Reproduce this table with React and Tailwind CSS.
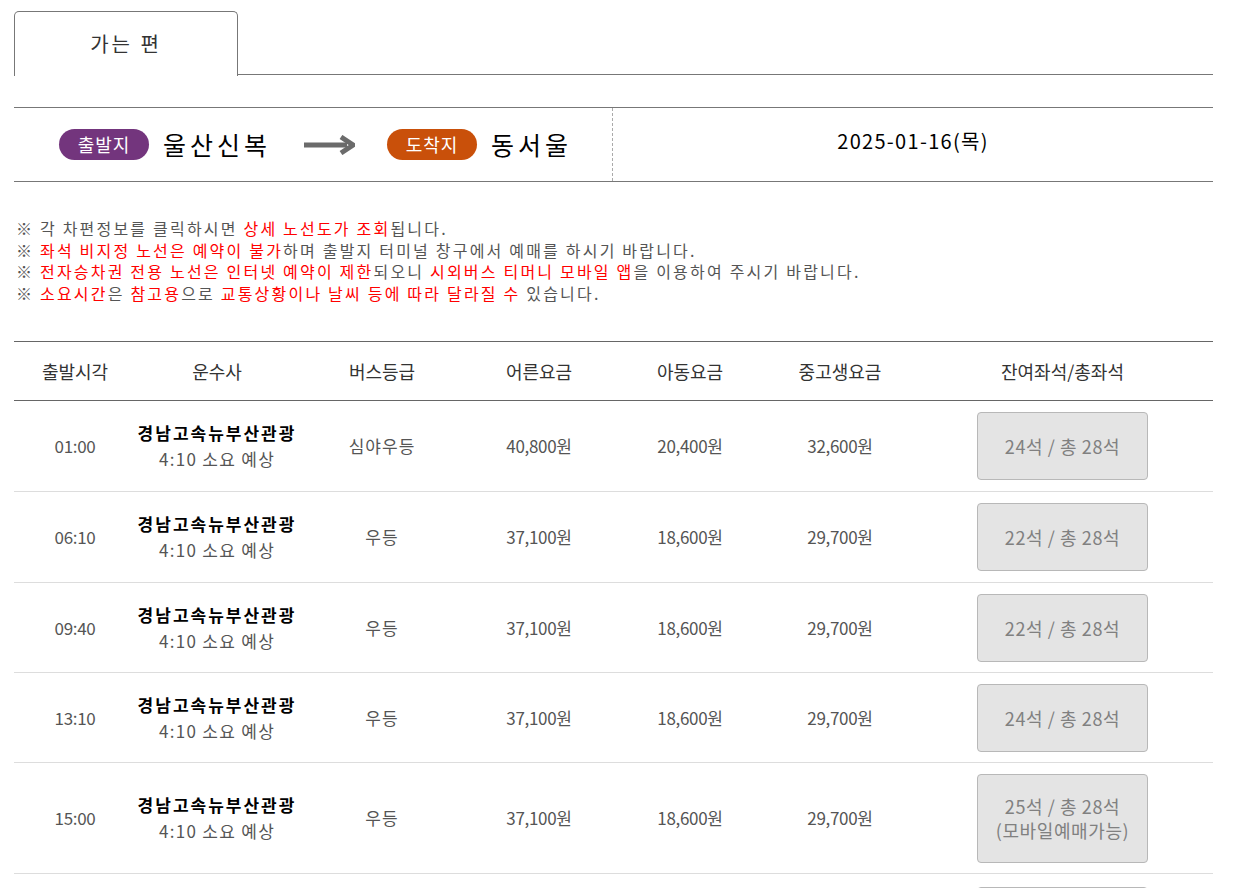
import React from 'react';

const FONT = { fontFamily: '"Noto Sans CJK KR", "Noto Sans", sans-serif' };

const rows = [
  { time: '01:00', grade: '심야우등', adult: '40,800원', child: '20,400원', teen: '32,600원', seats: '24석 / 총 28석', h: 'h-[91px]' },
  { time: '06:10', grade: '우등', adult: '37,100원', child: '18,600원', teen: '29,700원', seats: '22석 / 총 28석', h: 'h-[91px]' },
  { time: '09:40', grade: '우등', adult: '37,100원', child: '18,600원', teen: '29,700원', seats: '22석 / 총 28석', h: 'h-[90px]' },
  { time: '13:10', grade: '우등', adult: '37,100원', child: '18,600원', teen: '29,700원', seats: '24석 / 총 28석', h: 'h-[90px]' },
  { time: '15:00', grade: '우등', adult: '37,100원', child: '18,600원', teen: '29,700원', seats: '25석 / 총 28석', h: 'h-[111px]', mobile: true },
];

const cols = 'grid grid-cols-[122px_162px_168px_146px_156px_144px_301px]';

const Red = ({ children }) => <span className="text-[#ff0000]">{children}</span>;

const Arrow = () => (
  <svg width="52" height="20" viewBox="0 0 52 20" className="mx-8">
    <line x1="1" y1="10" x2="44" y2="10" stroke="#6b6b6b" strokeWidth="5" />
    <path d="M38 2 L50 10 L38 18" fill="none" stroke="#6b6b6b" strokeWidth="5" strokeLinejoin="miter" />
  </svg>
);

export default function App() {
  return (
    <div className="bg-white w-[1255px] min-h-[888px] px-[14px] pt-[11px] overflow-hidden" style={FONT}>
      {/* tab */}
      <div className="flex items-end w-[1199px]">
        <div className="w-[224px] h-[65px] border border-b-0 border-[#777] rounded-t-[5px] flex items-center justify-center text-[20px] text-[#333] tracking-[3px] -mb-px bg-white relative z-10">
          가는 편
        </div>
        <div className="flex-1 border-b border-[#777]" />
      </div>

      {/* route */}
      <div className="mt-[32px] w-[1199px] h-[75px] border-y border-[#777] flex">
        <div className="w-[599px] border-r border-dashed border-[#aaa] flex items-center pl-[45px]">
          <span className="h-[31px] w-[90px] rounded-full bg-[#73357d] text-white text-[18px] tracking-[1px] flex items-center justify-center">출발지</span>
          <span className="ml-[14px] text-[25px] text-black tracking-[4px]">울산신복</span>
          <Arrow />
          <span className="h-[31px] w-[90px] rounded-full bg-[#c9500a] text-white text-[18px] tracking-[1px] flex items-center justify-center">도착지</span>
          <span className="ml-[14px] text-[25px] text-black tracking-[4px]">동서울</span>
        </div>
        <div className="flex-1 flex items-center justify-center text-[20px] text-black pb-[8px] tracking-[1.3px]">
          2025-01-16(목)
        </div>
      </div>

      {/* notes */}
      <div className="mt-[36px] pl-[2px] text-[16px] leading-[21.5px] text-[#555] tracking-[2.2px]">
        <p>※ 각 차편정보를 클릭하시면 <Red>상세 노선도가 조회</Red>됩니다.</p>
        <p>※ <Red>좌석 비지정 노선은 예약이 불가</Red>하며 출발지 터미널 창구에서 예매를 하시기 바랍니다.</p>
        <p>※ <Red>전자승차권 전용 노선은 인터넷 예약이 제한</Red>되오니 <Red>시외버스 티머니 모바일 앱</Red>을 이용하여 주시기 바랍니다.</p>
        <p>※ <Red>소요시간</Red>은 <Red>참고용</Red>으로 <Red>교통상황이나 날씨 등에 따라 달라질 수</Red> 있습니다.</p>
      </div>

      {/* table */}
      <div className="mt-[37px] w-[1199px]">
        <div className={`${cols} h-[60px] border-y border-[#666] items-center text-center text-[18px] text-[#333]`}>
          <div>출발시각</div>
          <div>운수사</div>
          <div>버스등급</div>
          <div>어른요금</div>
          <div>아동요금</div>
          <div>중고생요금</div>
          <div>잔여좌석/총좌석</div>
        </div>
        {rows.map((r) => (
          <div
            key={r.time}
            className={`${cols} ${r.h} border-b border-[#ddd] items-center text-center text-[17px] text-[#555] tracking-[-0.3px]`}
          >
            <div>{r.time}</div>
            <div className="flex flex-col leading-[26px]">
              <span className="text-black font-bold text-[17px] tracking-[2px]">경남고속뉴부산관광</span>
              <span className="tracking-[1.3px]">4:10 소요 예상</span>
            </div>
            <div className="tracking-[1px]">{r.grade}</div>
            <div>{r.adult}</div>
            <div>{r.child}</div>
            <div>{r.teen}</div>
            <div className="flex justify-center">
              <button
                className={`w-[171px] ${r.mobile ? 'h-[89px]' : 'h-[68px]'} bg-[#e4e4e4] border border-[#b8b8b8] rounded-[4px] text-[#808080] text-[18px] tracking-[0.6px] leading-[24px] flex flex-col items-center justify-center`}
                style={FONT}
              >
                <span>{r.seats}</span>
                {r.mobile && <span>(모바일예매가능)</span>}
              </button>
            </div>
          </div>
        ))}
        <div className={`${cols} h-[40px]`}>
          <div /><div /><div /><div /><div /><div />
          <div className="flex justify-center pt-[13px]">
            <div className="w-[171px] h-[40px] bg-[#e4e4e4] border border-[#b8b8b8] rounded-[4px]" />
          </div>
        </div>
      </div>
    </div>
  );
}
